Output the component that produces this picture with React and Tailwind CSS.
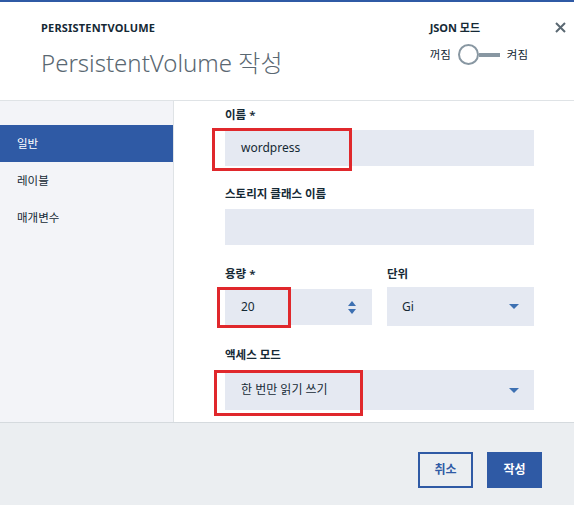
import React from 'react';

const font = { fontFamily: '"Noto Sans", "Noto Sans CJK KR", sans-serif' };

function Caret() {
    return (
        <svg width="10" height="5" viewBox="0 0 10 5">
            <path d="M0 0h10L5 5z" fill="#3d70b2" />
        </svg>
    );
}

function Stepper() {
    return (
        <div className="flex flex-col items-center gap-[3px]">
            <svg width="8" height="5" viewBox="0 0 8 5">
                <path d="M0 5h8L4 0z" fill="#3d70b2" />
            </svg>
            <svg width="8" height="5" viewBox="0 0 8 5">
                <path d="M0 0h8L4 5z" fill="#3d70b2" />
            </svg>
        </div>
    );
}

function Label({ children, className = '' }) {
    return (
        <div className={`h-[16px] leading-[16px] text-[11.5px] font-semibold text-[#152935] ${className}`}>
            {children}
        </div>
    );
}

export default function App() {
    const navItems = ['일반', '레이블', '매개변수'];

    return (
        <div className="w-[574px] h-[505px] flex flex-col bg-white overflow-hidden" style={font}>
            <div className="h-[2px] bg-[#2f5aa5]"></div>

            {/* header */}
            <div className="h-[99px] border-b border-[#dfe3e6] flex justify-between">
                <div className="pl-[41px] pt-[18px]">
                    <div className="text-[11px] font-bold text-[#152935] leading-[16px] tracking-[0.2px]">
                        PERSISTENTVOLUME
                    </div>
                    <div className="mt-[11px] text-[24px] font-light text-[#5a6872] leading-[32px]">
                        PersistentVolume 작성
                    </div>
                </div>
                <div className="flex pt-[18px] pr-[8px]">
                    <div>
                        <div className="text-[11px] font-bold text-[#152935] leading-[16px]">JSON 모드</div>
                        <div className="mt-[8px] flex items-center text-[11.5px] text-[#152935]">
                            <span>꺼짐</span>
                            <div className="ml-[7px] flex items-center">
                                <div className="w-[21px] h-[21px] rounded-full border-2 border-[#8897a2] bg-white"></div>
                                <div className="w-[21px] h-[4px] bg-[#8897a2]"></div>
                            </div>
                            <span className="ml-[7px]">켜짐</span>
                        </div>
                    </div>
                    <button className="ml-[26px] mt-[1px] h-[12px] w-[12px] flex items-center justify-center self-start">
                        <svg width="11" height="11" viewBox="0 0 11 11">
                            <path d="M1 1l9 9M10 1l-9 9" stroke="#5a6872" strokeWidth="2" />
                        </svg>
                    </button>
                </div>
            </div>

            {/* body */}
            <div className="flex h-[322px] border-b border-[#d5dade]">
                <div className="w-[174px] bg-[#f3f4f8] border-r border-[#dfe3e6] pt-[24px]">
                    {navItems.map((item, i) => (
                        <div
                            key={item}
                            className={`h-[37px] flex items-center pl-[17px] text-[11.5px] ${
                                i === 0 ? 'bg-[#2f5aa5] text-white' : 'text-[#152935]'
                            }`}
                        >
                            {item}
                        </div>
                    ))}
                </div>

                <div className="relative flex-1 overflow-hidden pl-[51px] pr-[40px] pt-[6px]">
                    <Label className="mb-[7px]">이름 *</Label>
                    <div className="h-[36px] bg-[#e5e9f2] flex items-center pl-[16px] text-[12px] text-[#152935]">
                        wordpress
                    </div>

                    <Label className="mt-[20px] mb-[7px]">스토리지 클래스 이름</Label>
                    <div className="h-[36px] bg-[#e5e9f2]"></div>

                    <div className="mt-[21px] flex gap-[15px]">
                        <div className="flex-1">
                            <Label className="mb-[7px]">용량 *</Label>
                            <div className="h-[36px] bg-[#e5e9f2] flex items-center justify-between pl-[16px] pr-[16px] text-[12px] text-[#152935]">
                                <span>20</span>
                                <Stepper />
                            </div>
                        </div>
                        <div className="flex-1">
                            <Label className="mb-[5px]">단위</Label>
                            <div className="h-[39px] bg-[#e5e9f2] flex items-center justify-between pl-[15px] pr-[15px] text-[12px] text-[#152935]">
                                <span>Gi</span>
                                <Caret />
                            </div>
                        </div>
                    </div>

                    <Label className="mt-[21px] mb-[7px]">액세스 모드</Label>
                    <div className="h-[40px] bg-[#e5e9f2] flex items-center justify-between pl-[16px] pr-[15px] text-[12px] text-[#152935]">
                        <span>한 번만 읽기 쓰기</span>
                        <Caret />
                    </div>

                    {/* highlight boxes */}
                    <div className="absolute left-[38px] top-[27px] w-[140px] h-[43px] border-[3px] border-[#e0282c]"></div>
                    <div className="absolute left-[43px] top-[186px] w-[74px] h-[41px] border-[3px] border-[#e0282c]"></div>
                    <div className="absolute left-[40px] top-[269px] w-[149px] h-[46px] border-[3px] border-[#e0282c]"></div>
                </div>
            </div>

            {/* footer */}
            <div className="flex-1 bg-[#ebeef1] flex justify-end items-start pt-[29px] pr-[32px] gap-[14px]">
                <button className="w-[55px] h-[36px] border-2 border-[#2f5aa5] text-[#2f5aa5] text-[12px] font-semibold">
                    취소
                </button>
                <button className="w-[55px] h-[36px] bg-[#2f5aa5] text-white text-[12px] font-semibold">
                    작성
                </button>
            </div>
        </div>
    );
}
